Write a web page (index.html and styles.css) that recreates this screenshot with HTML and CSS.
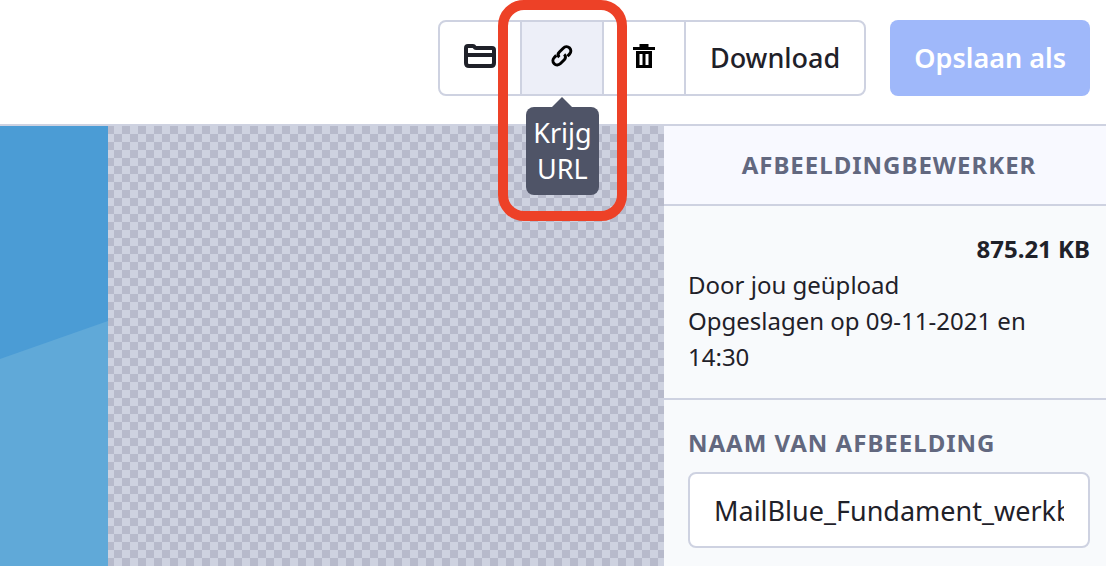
FILE: index.html
```html
<!DOCTYPE html>
<html lang="nl">
<head>
<meta charset="utf-8">
<title>Afbeeldingbewerker</title>
<meta name="viewport" content="width=device-width, initial-scale=1">
<link rel="stylesheet" href="styles.css">
</head>
<body>
<header class="toolbar">
  <div class="button-group">
    <button class="group-button icon-button" type="button" aria-label="Map">
      <svg class="icon-folder" viewBox="0 0 32 24" aria-hidden="true">
        <path d="M2 19V4q0-2 2-2h5q1 0 1.500 1t1.500 1h16q2 0 2 2v13q0 3-3 3H5q-3 0-3-3zM2 11h28" fill="none" stroke="currentColor" stroke-width="4"/>
      </svg>
    </button>
    <div class="link-item">
      <button class="group-button icon-button is-active" type="button" aria-label="Krijg URL" aria-describedby="link-tip">
        <svg class="icon-link" viewBox="0 0 22 22" aria-hidden="true">
          <g fill="none" stroke="#000" stroke-width="3">
            <path d="M8.300 12.200C6.700 10.600 6.800 8.600 8.400 7L12.200 3.200C14 1.400 16.700 1.200 18.500 2.900C20.300 4.700 20.200 7.300 18.500 9.100L16.500 11.200"/>
            <path d="M13.200 9.300C14.900 10.900 14.900 13 13.300 14.700L9.500 18.500C7.700 20.300 5 20.500 3.200 18.700C1.400 17 1.600 14.300 3.300 12.500L5.300 10.400"/>
          </g>
        </svg>
      </button>
      <div class="tooltip" id="link-tip" role="tooltip">Krijg URL</div>
      <div class="highlight"></div>
    </div>
    <button class="group-button icon-button" type="button" aria-label="Verwijderen">
      <svg class="icon-trash" viewBox="0 0 22 24" aria-hidden="true">
        <path fill="#000" fill-rule="evenodd" d="M6.500 0h9v3H22v3H0V3h6.500zM3 7h16v17H3zM6.500 10v11H9.500V10zM12.500 10v11H15.500V10z"/>
      </svg>
    </button>
    <button class="group-button text-button" type="button">Download</button>
  </div>
  <button class="save-button" type="button">Opslaan als</button>
</header>
<main class="editor">
  <section class="canvas" aria-label="Afbeelding">
    <svg class="picture" viewBox="0 0 108 440" preserveAspectRatio="none" aria-hidden="true">
      <path fill="#4b9cd5" d="M0 0h108v440H0z"/>
      <path fill="#60a9d8" d="M0 233L108 195V440H0z"/>
    </svg>
  </section>
  <aside class="sidebar">
    <h1 class="sidebar-title">Afbeeldingbewerker</h1>
    <section class="details">
      <strong class="file-size">875.21 KB</strong>
      <p>Door jou geüpload</p>
      <p>Opgeslagen op 09-11-2021 en 14:30</p>
    </section>
    <form class="name-form">
      <label class="name-label" for="image-name">Naam van afbeelding</label>
      <input class="name-input" id="image-name" type="text" value="MailBlue_Fundament_werkboek">
    </form>
  </aside>
</main>
</body>
</html>
```
FILE: styles.css
```css
* {
  box-sizing: border-box;
}

body {
  margin: 0;
  min-height: 100vh;
  display: flex;
  flex-direction: column;
  background: #fff;
  color: #1f2129;
  font: 24px/36px "Noto Sans", sans-serif;
}

button,
input {
  font: inherit;
  color: inherit;
}

.toolbar {
  display: flex;
  justify-content: flex-end;
  gap: 24px;
  padding: 20px 16px 28px;
  border-bottom: 2px solid #ced2e1;
}

.button-group {
  display: flex;
  border: 2px solid #ced2e1;
  border-radius: 8px;
}

.group-button {
  display: flex;
  align-items: center;
  justify-content: center;
  height: 72px;
  padding: 0 24px;
  border: 0;
  background: none;
}

.icon-button {
  width: 82px;
  padding-bottom: 4px;
  border-right: 2px solid #ced2e1;
}

.is-active {
  background: #edeff8;
}

.text-button,
.save-button {
  font-size: 27px;
  font-weight: 500;
}

.save-button {
  height: 76px;
  padding: 0 24px;
  border: 0;
  border-radius: 8px;
  background: #9fb8fa;
  color: #fff;
  font-weight: 600;
}

.icon-folder {
  flex: none;
  width: 32px;
  height: 24px;
}

.icon-link {
  width: 22px;
  height: 22px;
}

.icon-trash {
  width: 22px;
  height: 24px;
}

.link-item {
  position: relative;
}

.tooltip {
  position: absolute;
  z-index: 2;
  top: 85px;
  left: 4px;
  width: 73px;
  padding: 8px 4px;
  border-radius: 8px;
  background: #4f5467;
  color: #fff;
  font-size: 27px;
  text-align: center;
}

.tooltip::before {
  content: "";
  position: absolute;
  top: -10px;
  left: 26px;
  border: 10px solid transparent;
  border-top: 0;
  border-bottom-color: #4f5467;
}

.highlight {
  position: absolute;
  z-index: 3;
  top: -22px;
  left: -24px;
  width: 129px;
  height: 221px;
  border: 10px solid #ed4127;
  border-radius: 26px;
  pointer-events: none;
}

.editor {
  flex: 1;
  display: flex;
}

.canvas {
  flex: 1;
  display: flex;
  background: repeating-conic-gradient(#b7bacb 0 25%, #ced2e0 0 50%) 2px 0 / 16px 16px;
}

.picture {
  width: 108px;
  height: auto;
}

.sidebar {
  width: 442px;
  background: #f8fafc;
}

.sidebar-title,
.name-label {
  color: #62687f;
  font-size: 24px;
  font-weight: 700;
  letter-spacing: 1px;
  text-transform: uppercase;
}

.sidebar-title {
  margin: 0;
  padding: 21px 16px 21px 24px;
  border-bottom: 2px solid #ced2e1;
  background: #f8f9ff;
  text-align: center;
}

.details {
  padding: 25px 16px 23px 24px;
  border-bottom: 2px solid #ced2e1;
}

.details p {
  margin: 0;
}

.file-size {
  display: block;
  text-align: right;
}

.name-form {
  padding: 25px 16px 18px 24px;
}

.name-label {
  display: block;
  margin-bottom: 11px;
}

.name-input {
  display: block;
  width: 100%;
  height: 76px;
  padding: 0 24px;
  border: 2px solid #ced2e1;
  border-radius: 8px;
  background: #fff;
  font-size: 27px;
}
```
